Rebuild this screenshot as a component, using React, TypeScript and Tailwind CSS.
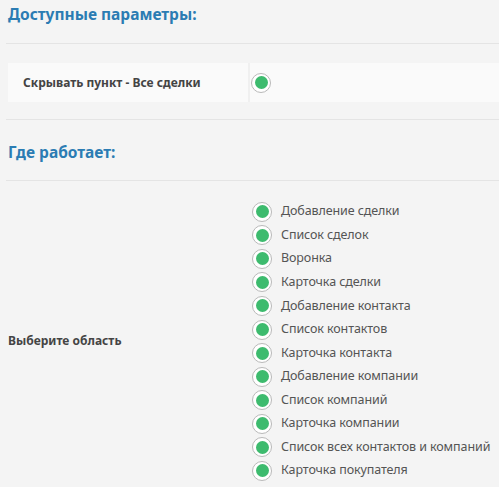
const areas = [
  "Добавление сделки",
  "Список сделок",
  "Воронка",
  "Карточка сделки",
  "Добавление контакта",
  "Список контактов",
  "Карточка контакта",
  "Добавление компании",
  "Список компаний",
  "Карточка компании",
  "Список всех контактов и компаний",
  "Карточка покупателя",
];

function Radio() {
  return (
    <span className="flex h-[20px] w-[20px] shrink-0 items-center justify-center rounded-full border border-[#b9b9b9] bg-white">
      <span className="h-[13px] w-[13px] rounded-full bg-[#3dbb6e]" />
    </span>
  );
}

export default function App() {
  return (
    <div className="min-h-[487px] w-[499px] overflow-hidden bg-[#f4f4f4] font-['Noto_Sans','Open_Sans',sans-serif]">
      <h2 className="flex h-[30px] items-center pl-[8px] text-[15.5px] font-bold text-[#2b7cb3]">
        Доступные параметры:
      </h2>
      <div className="mt-[13px] ml-[6px] h-px bg-[#e4e4e4]" />

      <div className="mt-[19px] ml-[8px] flex h-[39px] bg-[#fafafa]">
        <div className="flex w-[242px] shrink-0 items-center border-r-2 border-[#f0f0f0] pl-[15px] text-[12px] font-bold text-[#444]">
          Скрывать пункт - Все сделки
        </div>
        <div className="flex items-center pl-[1px]">
          <Radio />
        </div>
      </div>

      <div className="mt-[17px] ml-[6px] h-px bg-[#e4e4e4]" />

      <h2 className="mt-[18px] flex h-[30px] items-center pl-[8px] text-[15.5px] font-bold text-[#2b7cb3]">
        Где работает:
      </h2>
      <div className="mt-[12px] ml-[6px] h-px bg-[#e4e4e4]" />

      <div className="mt-[19px] flex">
        <div className="flex w-[250px] shrink-0 items-center pl-[8px] text-[12px] font-bold text-[#444]">
          Выберите область
        </div>
        <ul className="flex flex-col pl-[2px]">
          {areas.map((a) => (
            <li key={a} className="flex h-[23.55px] items-center gap-[9px] whitespace-nowrap text-[12.5px] tracking-[-0.1px] text-[#555]">
              <Radio />
              {a}
            </li>
          ))}
        </ul>
      </div>
    </div>
  );
}
